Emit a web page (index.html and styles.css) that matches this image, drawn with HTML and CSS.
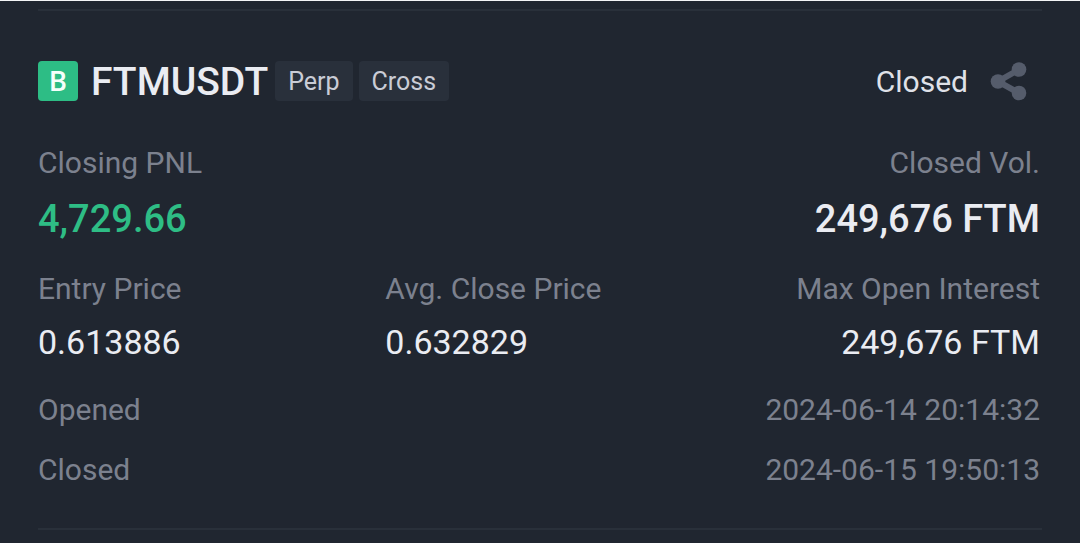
FILE: index.html
```html
<!DOCTYPE html>
<html lang="en">
<head>
    <meta charset="UTF-8">
    <meta name="viewport" content="width=device-width, initial-scale=1.0">
    <title>Position History</title>
    <link rel="stylesheet" href="styles.css">
</head>
<body>
    <main class="position">
        <header class="position-header">
            <span class="side">B</span>
            <h1>FTMUSDT</h1>
            <div class="tags">
                <span class="tag">Perp</span>
                <span class="tag">Cross</span>
            </div>
            <span class="status">Closed</span>
            <button type="button" class="share-btn" aria-label="Share">
                <svg width="38" height="40" viewBox="0 0 38 40" fill="currentColor">
                    <path d="M29 8.500 8 20.500 29 32" fill="none" stroke="currentColor" stroke-width="6"/>
                    <circle cx="29" cy="8.500" r="7.300"/>
                    <circle cx="8" cy="20.500" r="7.300"/>
                    <circle cx="29" cy="32" r="7.300"/>
                </svg>
            </button>
        </header>

        <dl class="summary">
            <div class="item">
                <dt>Closing PNL</dt>
                <dd class="profit">4,729.66</dd>
            </div>
            <div class="item right">
                <dt>Closed Vol.</dt>
                <dd>249,676 FTM</dd>
            </div>
        </dl>

        <dl class="prices">
            <div class="item">
                <dt>Entry Price</dt>
                <dd>0.613886</dd>
            </div>
            <div class="item">
                <dt>Avg. Close Price</dt>
                <dd>0.632829</dd>
            </div>
            <div class="item right">
                <dt>Max Open Interest</dt>
                <dd>249,676 FTM</dd>
            </div>
        </dl>

        <dl class="times">
            <div class="time-row">
                <dt>Opened</dt>
                <dd>2024-06-14 20:14:32</dd>
            </div>
            <div class="time-row">
                <dt>Closed</dt>
                <dd>2024-06-15 19:50:13</dd>
            </div>
        </dl>
    </main>
</body>
</html>
```
FILE: styles.css
```css
* {
    margin: 0;
    padding: 0;
    box-sizing: border-box;
}

body {
    background-color: #202630;
    color: #eaecf2;
    font-family: Roboto, "Liberation Sans", sans-serif;
    font-size: 30px;
    line-height: 40px;
    border-top: 1px solid #f4f5f6;
    padding: 8px 38px;
}

.position {
    border-top: 2px solid #29303a;
    border-bottom: 2px solid #29303a;
    padding: 49px 2px 38px 0;
}

/* Header */
.position-header {
    display: flex;
    align-items: center;
    margin-bottom: 41px;
    line-height: 42px;
}

.side {
    width: 40px;
    height: 40px;
    border-radius: 4px;
    background-color: #2dbd85;
    color: #f5fffb;
    font-size: 28px;
    font-weight: 500;
    text-align: center;
}

h1 {
    margin-left: 13px;
    padding-top: 2px;
    font-size: 39px;
    font-weight: 500;
    line-height: 40px;
}

.tags {
    display: flex;
    gap: 6px;
    margin-left: 7px;
}

.tag {
    height: 40px;
    padding: 0 13px;
    border-radius: 4px;
    background-color: #29303b;
    color: #c9ccd6;
    font-size: 25px;
}

.status {
    margin-left: auto;
    padding-top: 2px;
    color: #dfe1e8;
    line-height: 40px;
}

.share-btn {
    display: flex;
    margin-left: 22px;
    margin-right: 12px;
    border: none;
    background: none;
    color: #555c6b;
    cursor: pointer;
}

/* Figures */
dt {
    color: #7c818e;
}

.right {
    text-align: right;
}

.summary {
    display: flex;
    justify-content: space-between;
    margin-bottom: 26px;
}

.summary dd {
    margin-top: 12px;
    font-size: 38px;
    font-weight: 500;
    line-height: 48px;
}

.summary .profit {
    color: #2ebd85;
}

.prices {
    display: grid;
    grid-template-columns: repeat(3, 1fr);
    column-gap: 40px;
    margin-bottom: 28px;
}

.prices dd {
    margin-top: 13px;
    font-size: 34px;
}

/* Open and close times */
.times {
    display: flex;
    flex-direction: column;
    gap: 20px;
}

.time-row {
    display: flex;
    justify-content: space-between;
}

.time-row dd {
    color: #7c818e;
}

/* Narrow screens */
@media (max-width: 800px) {
    body {
        font-size: 20px;
        line-height: 30px;
        padding: 8px 16px;
    }

    h1,
    .summary dd,
    .prices dd {
        font-size: 24px;
    }

    .tag {
        font-size: 16px;
    }

    .prices {
        column-gap: 16px;
    }
}
```
